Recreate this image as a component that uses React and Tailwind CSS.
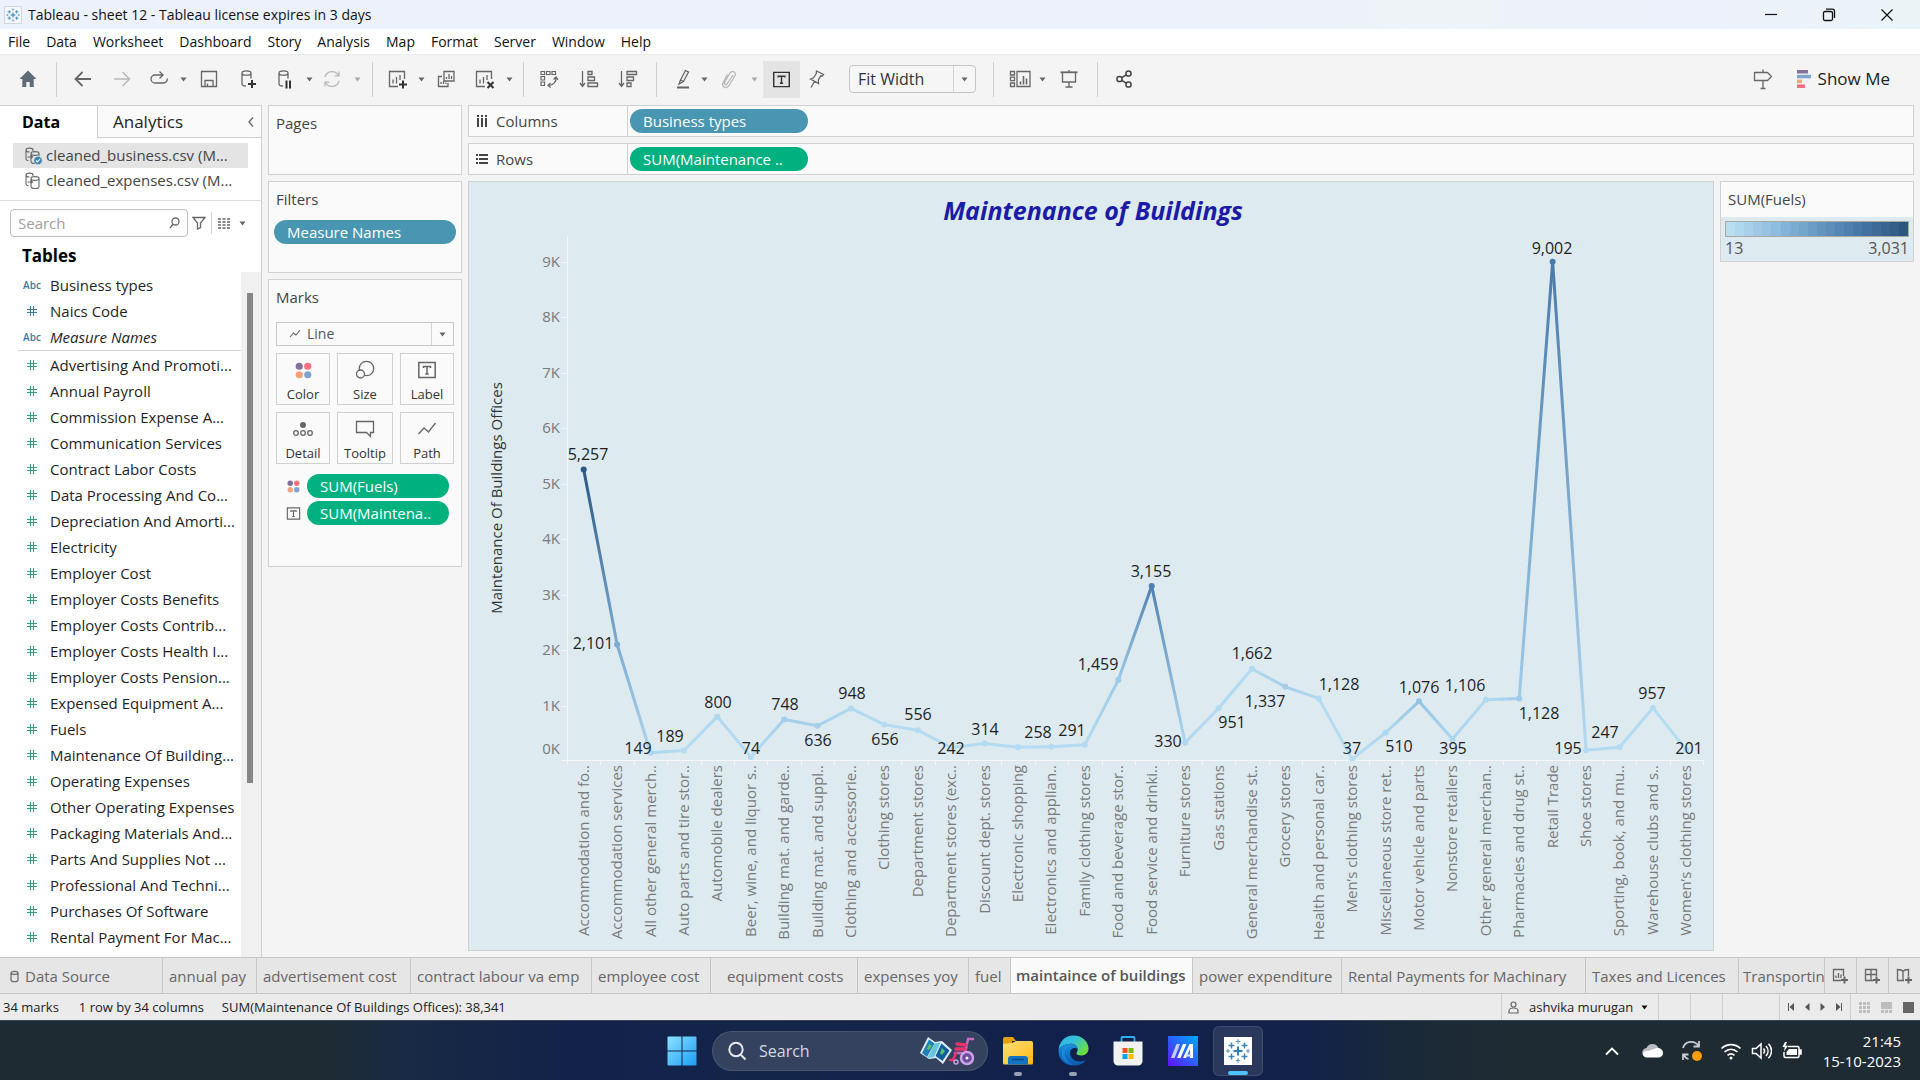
import React from "react";

const MENU = ["File", "Data", "Worksheet", "Dashboard", "Story", "Analysis", "Map", "Format", "Server", "Window", "Help"];

const DIMENSIONS = [
  { name: "Business types", kind: "Abc" },
  { name: "Naics Code", kind: "#" },
  { name: "Measure Names", kind: "Abc", italic: true },
];

const MEASURES = [
  "Advertising And Promoti...",
  "Annual Payroll",
  "Commission Expense A...",
  "Communication Services",
  "Contract Labor Costs",
  "Data Processing And Co...",
  "Depreciation And Amorti...",
  "Electricity",
  "Employer Cost",
  "Employer Costs Benefits",
  "Employer Costs Contrib...",
  "Employer Costs Health I...",
  "Employer Costs Pension...",
  "Expensed Equipment A...",
  "Fuels",
  "Maintenance Of Building...",
  "Operating Expenses",
  "Other Operating Expenses",
  "Packaging Materials And...",
  "Parts And Supplies Not ...",
  "Professional And Techni...",
  "Purchases Of Software",
  "Rental Payment For Mac...",
];

// name, value, colour, label text, label centre x, label centre y
const POINTS = [
  ["Accommodation and fo..", 5257, "#2a5783", "5,257", 119, 232],
  ["Accommodation services", 2101, "#7cabd3", "2,101", 124, 421],
  ["All other general merch..", 149, "#acd5ee", "149", 169, 526],
  ["Auto parts and tire stor..", 189, "#b7dcf1", "189", 201, 514],
  ["Automobile dealers", 800, "#aed7ef", "800", 249, 480],
  ["Beer, wine, and liquor s..", 74, "#b7dcf2", "74", 282, 526],
  ["Building mat. and garde..", 748, "#a3cfeb", "748", 316, 482],
  ["Building mat. and suppl..", 636, "#a6d0ea", "636", 349, 518],
  ["Clothing and accessorie..", 948, "#b0d9f0", "948", 383, 471],
  ["Clothing stores", 656, "#b4dbf1", "656", 416, 517],
  ["Department stores", 556, "#b4dbf1", "556", 449, 492],
  ["Department stores (exc..", 242, "#b7dcf2", "242", 482, 526],
  ["Discount dept. stores", 314, "#b2daf1", "314", 516, 507],
  ["Electronic shopping", 248, "#b4dbf1", "", 0, 0],
  ["Electronics and applian..", 258, "#b4dbf1", "258", 569, 510],
  ["Family clothing stores", 291, "#b4dbf1", "291", 603, 508],
  ["Food and beverage stor..", 1459, "#9ccae8", "1,459", 629, 442],
  ["Food service and drinki..", 3155, "#4f80b1", "3,155", 682, 349],
  ["Furniture stores", 330, "#b0d8f0", "330", 699, 519],
  ["Gas stations", 951, "#b2daf1", "951", 763, 500],
  ["General merchandise st..", 1662, "#b2daf1", "1,662", 783, 431],
  ["Grocery stores", 1337, "#a3ceea", "1,337", 796, 479],
  ["Health and personal car..", 1128, "#b2daf1", "1,128", 870, 462],
  ["Men’s clothing stores", 37, "#b9ddf1", "37", 883, 526],
  ["Miscellaneous store ret..", 510, "#afd8f0", "510", 930, 524],
  ["Motor vehicle and parts", 1076, "#94c4e4", "1,076", 950, 465],
  ["Nonstore retailers", 395, "#acd5ee", "395", 984, 526],
  ["Other general merchan..", 1106, "#b2daf1", "1,106", 996, 463],
  ["Pharmacies and drug st..", 1128, "#9ecbe8", "1,128", 1070, 491],
  ["Retail Trade", 9002, "#4a7aab", "9,002", 1083, 26],
  ["Shoe stores", 195, "#b4dbf1", "195", 1099, 526],
  ["Sporting, book, and  mu..", 247, "#b4dbf1", "247", 1136, 510],
  ["Warehouse clubs and s..", 957, "#b4dbf1", "957", 1183, 471],
  ["Women’s clothing stores", 201, "#b7dcf2", "201", 1220, 526],
];

const LEGEND = [
  "#b9ddf1", "#afd8ef", "#a8d0e8", "#9fc8e6", "#97c3e2", "#8dbcde", "#84b3da", "#7cabd0", "#74a5cb", "#6c9dc5",
  "#6495be", "#5d8db8", "#5586b5", "#4f7fae", "#4879a6", "#43719f", "#3e6a97", "#38648f", "#325d87", "#2b5680",
];

const SHEETS = [
  ["annual pay", "w-[94px] pl-1.5"],
  ["advertisement cost", "w-[154px] pl-1.5"],
  ["contract labour va emp", "w-[181px] pl-1.5"],
  ["employee cost", "w-[119px] pl-1.5"],
  ["equipment costs", "w-[147px] pl-4"],
  ["expenses yoy", "w-[111px] pl-1.5"],
  ["fuel", "w-[42px] pl-1.5"],
  ["maintaince of buildings", "w-[182px] pl-[5px]", true],
  ["power expenditure", "w-[149px] pl-1.5"],
  ["Rental Payments for Machinary", "w-[244px] pl-1.5"],
  ["Taxes and Licences", "w-[153px] pl-1.5"],
];

const Svg = ({ w = 20, h = 20, children, color = "#666", sw = 1.3, ...rest }) => (
  <svg width={w} height={h} viewBox={`0 0 ${w} ${h}`} fill="none" stroke={color} strokeWidth={sw} aria-hidden="true" className="shrink-0" {...rest}>
    {children}
  </svg>
);

const Caret = ({ color = "#666" }) => (
  <svg width="7" height="5" viewBox="0 0 7 5" aria-hidden="true"><path d="M0.5 0.5h6l-3 4z" fill={color} /></svg>
);

const cross = (x, y, s, color, w) => (
  <path key={`${x}-${y}`} d={`M${x - s} ${y}h${2 * s}M${x} ${y - s}v${2 * s}`} stroke={color} strokeWidth={w} />
);

function TableauMark({ size, className }) {
  return (
    <svg width={size} height={size} viewBox="0 0 28 28" className={className} fill="none" aria-hidden="true">
      {cross(14, 14, 4.5, "#2f7fb5", 2)}
      {cross(7.5, 8.5, 3, "#3b87b4", 1.5)}
      {cross(20.5, 8.5, 3, "#3b87b4", 1.5)}
      {cross(7.5, 19.5, 3, "#3b87b4", 1.5)}
      {cross(20.5, 19.5, 3, "#3b87b4", 1.5)}
      {cross(14, 4.5, 2.2, "#5b9bc4", 1.2)}
      {cross(14, 23.5, 2.2, "#5b9bc4", 1.2)}
      {cross(4, 14, 2, "#5b9bc4", 1.2)}
      {cross(24, 14, 2, "#5b9bc4", 1.2)}
    </svg>
  );
}

const Home = () => (
  <Svg><path d="M10 1.500 1.500 10h2.800v8h4v-5h3.400v5h4v-8h2.800z" fill="#5f6b79" stroke="none" /></Svg>
);
const Back = () => <Svg sw={1.8}><path d="M18 10H3M9.500 3 2.500 10l7 7" /></Svg>;
const Forward = () => <Svg sw={1.5} color="#b8b8b8"><path d="M2 10h15M10.500 3l7 7-7 7" /></Svg>;
const Redo = () => (
  <Svg><path d="M13.500 6H6a4 4 0 0 0 0 8h8.500a4 4 0 0 0 3.800-4.500M10.500 2.500 14 6l-3.500 3.500" /></Svg>
);
const Save = () => <Svg><path d="M2.500 2.500h15v15h-15zM6 17.500v-6h8v6M8.500 17.500v-3" /></Svg>;
const Cylinder = "M4 4c0-1.400 2-2.200 4.500-2.200S13 2.600 13 4v5.500M4 4v11c0 1 1.500 1.900 4 2M4 4c0 1.400 2 2.200 4.500 2.200S13 5.400 13 4";
const DbPlus = () => <Svg><path d={Cylinder} /><path d="M14 11v8M10 15h8" stroke="#333" strokeWidth="2" /></Svg>;
const DbPause = () => <Svg><path d={Cylinder} /><path d="M11.500 11.500v8M15 11.500v8" stroke="#333" strokeWidth="2" /></Svg>;
const Refresh = () => (
  <Svg color="#b8b8b8"><path d="M3 8a7.300 7.300 0 0 1 13.500-1.500M17 12a7.300 7.300 0 0 1-13.500 1.500M17 2.500v4.300h-4.300M3 17.500v-4.300h4.300" /></Svg>
);
const NewSheet = () => (
  <Svg w={22} h={22}><path d="M12 18.500H3.500v-15h15V11M7 15.500v-4M10.500 15.500V9M14 12V7" /><path d="M17 12.500v8M13 16.500h8" stroke="#333" strokeWidth="2" /></Svg>
);
const Duplicate = () => <Svg><path d="M8 2.500h10v9.500H8zM6 7.500H2.500v10H12V14M10.500 10V8M13 10V5M15.500 10V7M5 15v-2M7.500 15v-3M10 15v-1.500" /></Svg>;
const ClearSheet = () => (
  <Svg w={22} h={22}><path d="M12 18.500H3.500v-15h15V11M7 15.500v-4M10.500 15.500V9M14 12V7" /><path d="M14.500 14l6 6M20.500 14l-6 6" stroke="#333" strokeWidth="2" /></Svg>
);
const Swap = () => (
  <Svg sw={1.2}><path d="M2 2.500h3.500v3H2zM7.500 2.500H11v3H7.500zM13 2.500h3.500v3H13zM2 7.500h3.500v3.500H2zM2 13h3.500v3.500H2zM17 8.500c.5 4-2.500 7.500-7.500 8M14.500 10.500l2.500-2.500 2 2.800M11.500 14l-2.500 2.500 2.700 2" /></Svg>
);
const SortAsc = () => <Svg><path d="M3.500 2v15M1 14l2.500 3.500L6 14M9 2.500h4v3H9zM9 8h6.500v3.500H9zM9 14h9.500v3.500H9z" /></Svg>;
const SortDesc = () => <Svg><path d="M3.500 2v15M1 14l2.500 3.500L6 14M9 2.500h9.500v3H9zM9 8h6.500v3.500H9zM9 14h4v3.500H9z" /></Svg>;
const Highlight = () => (
  <Svg><path d="M12.500 1.500l3 1.500-5 9.500-3-1.500zM7.500 11 6 15l4.500-2.500" /><path d="M4 18.500h12" strokeWidth="2" /></Svg>
);
const Clip = () => (
  <Svg color="#b8b8b8"><path d="M14 6 8 15c-1 1.500-3.300.3-2.500-1.500L11 4c2-3 6.500-.8 5 2.500l-6 10c-2.500 4-8.200 1.200-6-3l4.500-8" /></Svg>
);
const LabelT = ({ size = 20, color = "#444" }) => (
  <svg width={size} height={size} viewBox="0 0 20 20" fill="none" stroke={color} strokeWidth="1.500" aria-hidden="true" className="shrink-0">
    <path d="M1.800 2.500h16.400v15H1.800zM6.500 8V6.500h7V8M10 6.500v7.500M8.300 14h3.400" />
  </svg>
);
const Pin = () => <Svg><path d="M9.500 2l7 3.500-1.200 1.500-1.500-.2-2.500 4.200.3 3.500-8-4.500 3-1.200 2.700-4.200zM7.500 12.500l-3.500 6" /></Svg>;
const CardsIcon = () => (
  <Svg w={22}><path d="M1.500 2.500h4v3.500h-4zM1.500 8.200h4v3.500h-4zM1.500 14h4v3.500h-4zM8 2.500h13v15H8z" /><path d="M11.500 15.500v-3M14.500 15.500V7M17.500 15.500V9.500" strokeWidth="1.600" /></Svg>
);
const Present = () => <Svg><path d="M3.500 3.500v9.500h13V3.500M10 13v4.500M6.500 18h7M10 1v2" /><path d="M1.500 3.300h17" strokeWidth="1.800" /></Svg>;
const Share = () => (
  <Svg sw={1.5} color="#444"><circle cx="5.500" cy="10" r="2.600" /><circle cx="14.500" cy="4.500" r="2.600" /><circle cx="14.500" cy="15.500" r="2.600" /><path d="M7.700 8.600l4.600-2.800M7.700 11.400l4.600 2.800" /></Svg>
);

const Sep = ({ className }) => <div className={`h-[35px] w-px bg-[#cfcfcf] ${className}`} />;
const Tool = ({ label, className, children }) => (
  <button type="button" aria-label={label} className={`flex h-[37px] items-center justify-center ${className}`}>{children}</button>
);

function Toolbar() {
  return (
    <div className="flex h-[51px] items-center border-t border-[#ececec] bg-[#f4f4f4] pb-0.5">
      <Tool label="Home" className="w-14"><Home /></Tool>
      <Sep />
      <Tool label="Undo" className="ml-[7px] w-[38px]"><Back /></Tool>
      <Tool label="Redo" className="w-10"><Forward /></Tool>
      <Tool label="Replay" className="w-[34px]"><Redo /></Tool>
      <Tool label="Replay options" className="w-3.5"><Caret /></Tool>
      <Tool label="Save" className="w-[38px]"><Save /></Tool>
      <Tool label="New data source" className="w-10"><DbPlus /></Tool>
      <Tool label="Pause updates" className="w-[34px]"><DbPause /></Tool>
      <Tool label="Pause options" className="w-3.5"><Caret /></Tool>
      <Tool label="Run update" className="w-8"><Refresh /></Tool>
      <Tool label="Update options" className="w-[18px]"><Caret color="#aaa" /></Tool>
      <Sep className="ml-1.5" />
      <Tool label="New worksheet" className="ml-[9px] w-[30px]"><NewSheet /></Tool>
      <Tool label="New worksheet options" className="w-[18px]"><Caret /></Tool>
      <Tool label="Duplicate" className="w-8"><Duplicate /></Tool>
      <Tool label="Clear sheet" className="ml-1 w-9"><ClearSheet /></Tool>
      <Tool label="Clear options" className="w-3.5"><Caret /></Tool>
      <Sep className="ml-[7px]" />
      <Tool label="Swap rows and columns" className="ml-[5px] w-10"><Swap /></Tool>
      <Tool label="Sort ascending" className="w-10"><SortAsc /></Tool>
      <Tool label="Sort descending" className="w-[38px]"><SortDesc /></Tool>
      <Sep className="ml-[9px]" />
      <Tool label="Highlight" className="ml-2.5 w-8"><Highlight /></Tool>
      <Tool label="Highlight options" className="w-2.5"><Caret /></Tool>
      <Tool label="Group members" className="w-10"><Clip /></Tool>
      <Tool label="Group options" className="w-2.5"><Caret color="#aaa" /></Tool>
      <Tool label="Show mark labels" className="ml-1 w-[37px] bg-[#e4e4e4]"><LabelT size={19} color="#333" /></Tool>
      <Tool label="Fix axes" className="w-[34px]"><Pin /></Tool>
      <div className="relative ml-[15px] h-7 w-[127px] rounded-sm border border-[#c4c4c4] bg-[#f6f6f6]">
        <select aria-label="Fit" className="h-full w-full appearance-none bg-transparent pl-2 text-base leading-6 text-[#333]">
          <option>Fit Width</option>
        </select>
        <div className="pointer-events-none absolute inset-y-0 right-0 flex w-[22px] items-center justify-center border-l border-[#d4d4d4]"><Caret /></div>
      </div>
      <Sep className="ml-[17px]" />
      <Tool label="Show or hide cards" className="ml-[11px] w-[30px]"><CardsIcon /></Tool>
      <Tool label="Card options" className="w-3.5"><Caret /></Tool>
      <Tool label="Presentation mode" className="w-10"><Present /></Tool>
      <Sep className="ml-2" />
      <Tool label="Share" className="ml-2.5 w-8"><Share /></Tool>
      <div className="flex-1" />
      <Tool label="Data guide" className="mr-5 w-7"><Svg h={22}><path d="M1.500 4.500h13l4 4-4 4h-13zM10 1.500v3M10 12.500v8M7.500 20.500h5" strokeLinejoin="round" /></Svg></Tool>
      <button type="button" className="mr-[30px] flex items-center gap-[7px] text-[17px] text-[#222]">
        <svg width="14" height="18" viewBox="0 0 14 18" aria-hidden="true">
          <path d="M0 0h11v3.500H0z" fill="#86719a" /><path d="M0 4.800h14v3.500H0z" fill="#7fa5cf" />
          <path d="M0 9.600h5v3.500H0z" fill="#f4a27c" /><path d="M0 14.400h8V18H0z" fill="#f9707f" />
        </svg>
        Show Me
      </button>
    </div>
  );
}

const DbSource = ({ checked }) => (
  <Svg w={20} sw={1.1}>
    <path d="M3 4c0-2.500 7-2.500 7 0v1M3 4c0 1.500 2 2 3.500 2M3 4v9c0 .8 1 1.500 2.500 1.800M8 7.500c0-2.500 8-2.500 8 0s-8 2.500-8 0zM8 7.500v8c0 1.200 2 2 4 2s4-.8 4-2v-8M4.500 11h5M7.500 9l2 2-2 2" />
    {checked && <><circle cx="15" cy="14.500" r="4.300" fill="#3d85b5" stroke="#e4e4e4" strokeWidth=".8" /><path d="M13 14.500l1.500 1.500 2.500-3" stroke="#fff" /></>}
  </Svg>
);

function FieldRow({ name, kind, italic, green }) {
  return (
    <li>
      <button type="button" className="flex h-[26px] w-full items-center text-left text-[15px] text-[#1f1f1f]">
        <span className="flex w-[50px] shrink-0 items-center justify-center pl-3.5">
          {kind === "Abc" ? (
            <span className="text-[10px] font-semibold text-[#3c7a9c]">Abc</span>
          ) : (
            <Svg w={12} h={12} sw={1.1} color={green ? "#35a077" : "#3c7a9c"}><path d="M4.500 1v10M7.500 1v10M1 4.500h10M1 7.500h10" /></Svg>
          )}
        </span>
        <span className={italic ? "whitespace-nowrap italic" : "whitespace-nowrap"}>{name}</span>
      </button>
    </li>
  );
}

function DataPane() {
  return (
    <aside className="flex w-[262px] shrink-0 flex-col border-t border-r border-[#cfcfcf] bg-white">
      <div className="flex h-8">
        <button type="button" className="w-[97px] pr-[15px] text-center text-base font-bold text-black">Data</button>
        <button type="button" className="flex flex-1 items-center justify-between border-b border-l border-[#cfcfcf] bg-[#fafafa] pr-1.5 pl-[15px] text-[17px] text-[#222]">
          Analytics
          <Svg w={8} h={12}><path d="M6 1.500 2 6l4 4.500" /></Svg>
        </button>
      </div>
      <div className="flex flex-col px-[13px] pt-[5px] pb-[7px]">
        <button type="button" className="flex h-[25px] items-center gap-[3px] bg-[#e4e4e4] pl-2.5 text-[15px] whitespace-nowrap text-[#444]"><DbSource checked />cleaned_business.csv (M...</button>
        <button type="button" className="flex h-[25px] items-center gap-[3px] pl-2.5 text-[15px] whitespace-nowrap text-[#444]"><DbSource />cleaned_expenses.csv (M...</button>
      </div>
      <div className="flex items-center border-t border-[#dedede] pt-2 pr-3 pl-2.5">
        <label className="flex h-7 w-[178px] items-center rounded-sm border border-[#bdbdbd] pr-[7px] pl-[7px]">
          <input type="text" placeholder="Search" aria-label="Search fields" className="min-w-0 flex-1 text-[15px] outline-none placeholder:text-[#a0a0a0]" />
          <Svg w={11} h={12}><circle cx="6.500" cy="4.500" r="3.500" /><path d="M4 7 1 11" /></Svg>
        </label>
        <button type="button" aria-label="Filter" className="ml-px flex w-5 justify-center"><Svg w={14} h={14}><path d="M1 1.500h12L8.500 7v4.500l-3 1.500V7z" /></Svg></button>
        <div className="ml-0.5 h-[22px] w-px bg-[#d4d4d4]" />
        <button type="button" aria-label="View options" className="ml-1.5 flex flex-1 items-center gap-[9px]">
          <Svg w={12} h={11}><path d="M0 1h12M0 4h12M0 7h12M0 10h12" strokeDasharray="3 1.500" /></Svg>
          <Caret />
        </button>
      </div>
      <h2 className="pt-[5px] pb-0.5 pl-[22px] text-[17px] leading-7 font-bold text-black">Tables</h2>
      <div className="flex flex-1">
        <div className="w-[241px]">
          <ul>{DIMENSIONS.map((d) => <FieldRow key={d.name} {...d} />)}</ul>
          <div className="ml-[18px] h-px bg-[#d8d8d8]" />
          <ul className="pt-px">{MEASURES.map((m) => <FieldRow key={m} name={m} kind="#" green />)}</ul>
        </div>
        <div className="flex flex-1 justify-center bg-[#f0f0f0] pt-[21px] pr-0.5">
          <div className="h-[490px] w-1.5 bg-[#868686]" />
        </div>
      </div>
    </aside>
  );
}

const Pill = ({ children, className }) => (
  <button type="button" className={`h-6 rounded-full px-[13px] text-left text-[15px] leading-6 font-medium whitespace-nowrap text-white ${className}`}>{children}</button>
);

const ColorDots = ({ size }) => (
  <svg width={size} height={size} viewBox="0 0 18 18" aria-hidden="true">
    <circle cx="4.500" cy="4.500" r="3.800" fill="#86719a" /><circle cx="13.500" cy="4.500" r="3.800" fill="#f9707f" />
    <circle cx="4.500" cy="13.500" r="3.800" fill="#f4a27c" /><circle cx="13.500" cy="13.500" r="3.800" fill="#7fa5cf" />
  </svg>
);

const MARK_BUTTONS = [
  ["Color", <ColorDots size={17} />],
  ["Size", <Svg w={20}><circle cx="11.500" cy="8.500" r="7.200" /><circle cx="5.500" cy="14" r="4" fill="#fafafa" /></Svg>],
  ["Label", <LabelT size={20} color="#666" />],
  ["Detail", <Svg w={22} h={18}><circle cx="11" cy="5" r="3" fill="#666" stroke="none" /><circle cx="4" cy="13" r="2.300" /><circle cx="11" cy="13" r="2.300" /><circle cx="18" cy="13" r="2.300" /></Svg>],
  ["Tooltip", <Svg><path d="M1.500 2.500h17v11h-3v4l-4-4h-10z" /></Svg>],
  ["Path", <Svg><path d="M1.500 15l5.500-6 4.500 4 7-9" /></Svg>],
];

function Shelves() {
  return (
    <div className="flex w-[194px] shrink-0 flex-col gap-1.5 text-[15px] leading-5 text-[#444]">
      <section className="h-[70px] border border-[#d0d0d0] bg-[#fafafa] px-[7px] pt-[7px]">Pages</section>
      <section className="h-[92px] border border-[#d0d0d0] bg-[#fafafa] px-[5px] pt-[7px]">
        <h3 className="px-0.5">Filters</h3>
        <Pill className="mt-[11px] w-full bg-[#4996b2]">Measure Names</Pill>
      </section>
      <section className="h-[288px] border border-[#d0d0d0] bg-[#fafafa] px-[7px] pt-[7px]">
        <h3>Marks</h3>
        <div className="relative mt-[15px] h-6 border border-[#c8c8c8] bg-[#fafafa]">
          <select aria-label="Mark type" className="h-full w-full appearance-none bg-transparent pl-[30px] text-sm leading-5 text-[#555]"><option>Line</option></select>
          <div className="pointer-events-none absolute top-[6px] left-3"><Svg w={12} h={10} sw={1.1}><path d="M1 8l3.500-4L7 6l4-5" /></Svg></div>
          <div className="pointer-events-none absolute inset-y-0 right-0 flex w-[22px] items-center justify-center border-l border-[#d4d4d4]"><Caret /></div>
        </div>
        <div className="mt-[7px] grid grid-cols-[54px_56px_54px] gap-[7px]">
          {MARK_BUTTONS.map(([label, icon]) => (
            <button key={label} type="button" className="flex h-[52px] flex-col items-center justify-between border border-[#d0d0d0] pt-1.5 text-[13px] leading-5 text-[#333]">
              <span className="flex h-5 items-center">{icon}</span>{label}
            </button>
          ))}
        </div>
        <div className="mt-2.5 grid grid-cols-[24px_142px] items-center gap-x-[7px] gap-y-[3px]">
          <span className="flex justify-center pl-[11px]"><ColorDots size={15} /></span><Pill className="bg-[#00b180]">SUM(Fuels)</Pill>
          <span className="flex justify-center pl-[11px]"><LabelT size={15} color="#666" /></span><Pill className="bg-[#00b180]">SUM(Maintena..</Pill>
        </div>
      </section>
    </div>
  );
}

const PLOT_LEFT = 98;
const PLOT_RIGHT = 1234;
const BASE = 539;
const STEP = (PLOT_RIGHT - PLOT_LEFT) / POINTS.length;
const px = (i) => PLOT_LEFT + STEP * (i + 0.5);
const py = (v) => BASE - (v / 1000) * 55.45;

function Chart() {
  return (
    <svg viewBox="0 0 1244 728" className="block h-full w-full" role="img" aria-label="Maintenance of buildings by business type">
      <defs>
        <clipPath id="plot"><rect x={PLOT_LEFT} y="0" width={PLOT_RIGHT - PLOT_LEFT} height={BASE} /></clipPath>
        {POINTS.slice(1).map((p, i) => (
          <linearGradient key={i} id={`seg${i}`} gradientUnits="userSpaceOnUse" x1={px(i)} y1={py(POINTS[i][1])} x2={px(i + 1)} y2={py(p[1])}>
            <stop offset="0" stopColor={POINTS[i][2]} /><stop offset="1" stopColor={p[2]} />
          </linearGradient>
        ))}
      </defs>
      <g stroke="#f7f7f7" strokeWidth="1">
        <path d={`M${PLOT_LEFT + 0.5} 13.500V${BASE}`} />
        {Array.from({ length: 9 }, (_, k) => <path key={k} d={`M${PLOT_LEFT - 5} ${Math.round(py((k + 1) * 1000)) + 0.5}h5`} />)}
        {Array.from({ length: 35 }, (_, k) => <path key={k} d={`M${Math.round(PLOT_LEFT + STEP * k) + 0.5} ${BASE}v4`} />)}
      </g>
      <path d={`M${PLOT_LEFT - 5} ${BASE - 0.5}H${PLOT_RIGHT + 1}`} stroke="#f7f7f7" strokeWidth="1" />
      <g clipPath="url(#plot)">
        {POINTS.slice(1).map((p, i) => (
          <line key={i} x1={px(i)} y1={py(POINTS[i][1])} x2={px(i + 1)} y2={py(p[1])} stroke={`url(#seg${i})`} strokeWidth="3" strokeLinecap="round" />
        ))}
        {POINTS.map((p, i) => <circle key={i} cx={px(i)} cy={py(p[1])} r="3" fill={p[2]} />)}
      </g>
      <g fontSize="15" fill="#7a7a7a">
        {Array.from({ length: 10 }, (_, k) => (
          <text key={k} x="91" y={(k === 0 ? 527 : py(k * 1000)) + 5} textAnchor="end">{k}K</text>
        ))}
        {POINTS.map((p, i) => (
          <text key={i} transform={`translate(${px(i) + 5} 543) rotate(-90)`} textAnchor="end">{p[0]}</text>
        ))}
      </g>
      <text transform="translate(33 276) rotate(-90)" textAnchor="middle" fontSize="15" fill="#333">Maintenance Of Buildings Offices</text>
      <g fontSize="16" fill="#1f1f1f" textAnchor="middle">
        {POINTS.map((p, i) => p[3] && <text key={i} x={p[4]} y={p[5] + 6}>{p[3]}</text>)}
      </g>
    </svg>
  );
}

function Shelf({ label, icon, children }) {
  return (
    <div className="flex h-8 border border-[#d0d0d0] bg-[#fafafa]">
      <div className="flex w-[159px] items-center gap-2 border-r border-[#d0d0d0] pl-[7px] text-[15px] text-[#444]">{icon}{label}</div>
      <div className="flex items-center pl-0.5">{children}</div>
    </div>
  );
}

function Workspace() {
  return (
    <div className="flex min-w-0 flex-1 flex-col gap-1.5">
      <Shelf label="Columns" icon={<svg width="12" height="12" viewBox="0 0 12 12" fill="#444" aria-hidden="true"><path d="M1 0h2v2H1zM5 0h2v2H5zM9 0h2v2H9zM1 3h2v9H1zM5 3h2v9H5zM9 3h2v9H9z" /></svg>}>
        <Pill className="w-[178px] bg-[#4996b2]">Business types</Pill>
      </Shelf>
      <Shelf label="Rows" icon={<svg width="12" height="12" viewBox="0 0 12 12" fill="#444" aria-hidden="true"><path d="M0 1h2v2H0zM0 5h2v2H0zM0 9h2v2H0zM3 1h9v2H3zM3 5h9v2H3zM3 9h9v2H3z" /></svg>}>
        <Pill className="w-[178px] bg-[#00b180]">SUM(Maintenance ..</Pill>
      </Shelf>
      <div className="flex flex-1 items-start gap-1.5">
        <main className="flex min-w-0 flex-1 flex-col border border-[#d0d0d0] bg-[#ddeaef]">
          <h1 className="pt-4 pl-1 text-center text-[25px] leading-6 font-bold text-[#1b1ba8] italic">Maintenance of Buildings</h1>
          <Chart />
        </main>
        <section className="w-[194px] shrink-0 border border-[#d0d0d0] bg-[#fafafa] text-[15px] text-[#555]">
          <h2 className="px-[7px] pt-[7px] pb-2 leading-5 text-[#444]">SUM(Fuels)</h2>
          <div className="bg-[#ddeaef] px-1 pt-1">
            <div className="flex h-4 border border-[#a9a9a0]">
              {LEGEND.map((c) => <div key={c} className="flex-1" style={{ backgroundColor: c }} />)}
            </div>
            <div className="flex justify-between pt-px pb-[3px] text-base leading-5"><span>13</span><span>3,031</span></div>
          </div>
        </section>
      </div>
    </div>
  );
}

const TabIcon = ({ label, children }) => (
  <button type="button" aria-label={label} className="flex w-8 items-center justify-center border-l border-[#c6c6c6]">{children}</button>
);

function SheetTabs() {
  return (
    <nav className="flex h-[37px] border-y border-[#c6c6c6] bg-[#e6e6e6] text-[15px] text-[#666]">
      <button type="button" className="flex w-[162px] shrink-0 items-center gap-1.5 pt-0.5 pl-2.5">
        <Svg w={9} h={13} sw={1.2}><path d="M1 3c0-2.300 7-2.300 7 0v7c0 2.300-7 2.300-7 0zM1 3c0 1.800 7 1.800 7 0" /></Svg>Data Source
      </button>
      {SHEETS.map(([name, cls, active]) => (
        <button key={name} type="button" className={`shrink-0 border-l border-[#c6c6c6] text-left whitespace-nowrap ${cls} ${active ? "bg-[#fafafa] font-semibold text-[#555]" : "pt-0.5"}`}>{name}</button>
      ))}
      <button type="button" className="min-w-0 flex-1 border-l border-[#c6c6c6] pt-0.5 pl-1 text-left whitespace-nowrap">Transportin</button>
      <TabIcon label="New worksheet"><Svg w={17} h={16}><path d="M9 12.500H1.500v-11h10V8M4 10V7.500M6.500 10V5M9 10V6.500" /><path d="M12.500 8.500v7M9 12h7" strokeWidth="2" /></Svg></TabIcon>
      <TabIcon label="New dashboard"><Svg w={17} h={16}><path d="M9 12.500H1.500v-11h11V8M7 1.500v11M1.500 6.500h11" /><path d="M12.500 8.500v7M9 12h7" strokeWidth="2" /></Svg></TabIcon>
      <TabIcon label="New story"><Svg w={17} h={16}><path d="M7 3.500v9M8 12.500H1.500v-11c2.500 0 4.500.5 5.500 2 1-1.500 3-2 5.500-2V8" /><path d="M12.500 8.500v7M9 12h7" strokeWidth="2" /></Svg></TabIcon>
    </nav>
  );
}

function StatusBar() {
  return (
    <div className="flex h-[26px] bg-[#ebebeb] pl-[3px] text-[13px] leading-[26px] text-[#222]">
      <span>34 marks</span>
      <span className="ml-5">1 row by 34 columns</span>
      <span className="ml-[18px]">SUM(Maintenance Of Buildings Offices): 38,341</span>
      <div className="flex-1" />
      <button type="button" className="flex w-[157px] items-center border-l border-[#cfcfcf] pl-1.5">
        <Svg w={11} h={13} sw={1.2}><circle cx="5.500" cy="3.500" r="2.500" /><path d="M1 12V10c0-4 9-4 9 0v2z" /></Svg>
        <span className="ml-2.5 flex-1 text-left">ashvika murugan</span>
        <span className="mr-2.5"><Caret color="#111" /></span>
      </button>
      <div className="w-8 border-l border-[#cfcfcf]" />
      <div className="w-8 border-l border-[#cfcfcf]" />
      <div className="w-[57px] border-l border-[#cfcfcf]" />
      <div className="flex w-[71px] items-center justify-between border-l border-[#cfcfcf] px-2">
        <button type="button" aria-label="First sheet"><svg width="6" height="8" viewBox="0 0 6 8" fill="#555" aria-hidden="true"><path d="M0 0h1v8H0zM6 0v8L1.500 4z" /></svg></button>
        <button type="button" aria-label="Previous sheet"><svg width="5" height="8" viewBox="0 0 5 8" fill="#555" aria-hidden="true"><path d="M4.500 0v8L0 4z" /></svg></button>
        <button type="button" aria-label="Next sheet"><svg width="5" height="8" viewBox="0 0 5 8" fill="#555" aria-hidden="true"><path d="M.5 0v8L5 4z" /></svg></button>
        <button type="button" aria-label="Last sheet"><svg width="6" height="8" viewBox="0 0 6 8" fill="#555" aria-hidden="true"><path d="M5 0h1v8H5zM0 0v8L4.500 4z" /></svg></button>
      </div>
      <div className="flex w-[70px] items-center gap-[11px] border-l border-[#cfcfcf] pl-2">
        <button type="button" aria-label="Show sheet sorter"><svg width="11" height="11" viewBox="0 0 11 11" fill="#bdbdbd" aria-hidden="true"><path d="M0 0h3v3H0zM4 0h3v3H4zM8 0h3v3H8zM0 4h3v3H0zM4 4h3v3H4zM8 4h3v3H8zM0 8h3v3H0zM4 8h3v3H4zM8 8h3v3H8z" /></svg></button>
        <button type="button" aria-label="Show filmstrip"><svg width="11" height="11" viewBox="0 0 11 11" fill="#bdbdbd" aria-hidden="true"><path d="M0 0h11v7H0zM0 8h3v3H0zM4 8h3v3H4zM8 8h3v3H8z" /></svg></button>
        <button type="button" aria-label="Show tabs"><svg width="11" height="11" viewBox="0 0 11 11" fill="#666" aria-hidden="true"><path d="M0 0h11v11H0z" /></svg></button>
      </div>
    </div>
  );
}

const TaskApp = ({ label, running, active, children }) => (
  <button type="button" aria-label={label} className={`relative flex h-[50px] w-[50px] items-center justify-center rounded-md ${active ? "border border-white/10 bg-white/10" : ""}`}>
    {children}
    {running && <span className="absolute bottom-0 h-1 w-2 rounded-full bg-[#9aa0b4]" />}
    {active && <span className="absolute bottom-0 h-1 w-5 rounded-full bg-[#4cc2ff]" />}
  </button>
);

function Taskbar() {
  return (
    <footer className="grid h-[60px] grid-cols-[1fr_auto_1fr] items-center border-t border-[#3a4656] bg-[linear-gradient(90deg,#1f2b33_0%,#1f2b33_17%,#182a44_21%,#12224a_30%,#14254a_40%,#12214b_55%,#12224a_68%,#1a2938_73%,#1f2b33_78%,#1f2b33_100%)] text-white">
      <div />
      <div className="flex items-center gap-[5px]">
        <TaskApp label="Start">
          <svg width="30" height="30" viewBox="0 0 30 30" aria-hidden="true">
            <defs><linearGradient id="win" x1="0" y1="0" x2="1" y2="1" gradientUnits="objectBoundingBox"><stop offset="0" stopColor="#8be2ff" /><stop offset="1" stopColor="#1b9df5" /></linearGradient></defs>
            <path d="M1.500.5h13v14H.5v-13a1 1 0 0 1 1-1zM15.500.5h13a1 1 0 0 1 1 1v13h-14zM.5 15.500h14v14h-13a1 1 0 0 1-1-1zM15.500 15.500h14v13a1 1 0 0 1-1 1h-13z" fill="url(#win)" />
          </svg>
        </TaskApp>
        <label className="flex h-10 w-[276px] items-center rounded-full border border-white/10 bg-[#35425f] pr-2.5 pl-3.5">
          <Svg w={20} color="#e8e8ee" sw={2}><circle cx="9" cy="8.500" r="6.700" /><path d="M13.500 13.500 18.500 18.500" /></Svg>
          <input type="text" placeholder="Search" aria-label="Windows search" className="ml-3 min-w-0 flex-1 bg-transparent text-base outline-none placeholder:text-[#d5d8e0]" />
          <svg width="58" height="32" viewBox="0 0 58 32" aria-hidden="true">
            <path d="M9 2l7 5 7-1 10 9-9 14-7-6-7 1-9-6z" fill="#dfeef8" />
            <path d="M10 4.500l5.500 4L8 22l-5-4z" fill="#1f7fb8" /><path d="M15.500 8.500l6-1L15 22l-6.500 1z" fill="#66c5d8" /><path d="M22.500 8.500l8 7-7 10.500-7-5z" fill="#0f5f9c" />
            <path d="M10 9l3 2-3 4-2-1zM23 13l3 3-3 4-2-2z" fill="#5bbf6b" />
            <g fill="none" strokeLinecap="round">
              <path d="M54 4h-5l-3 14H36" stroke="#c76bc0" strokeWidth="2.500" /><path d="M38 9l9 1M37 14h9" stroke="#e8336d" strokeWidth="3.500" />
              <path d="M37 18l-3 7h-3" stroke="#e8336d" strokeWidth="2.500" />
              <circle cx="48" cy="23" r="6" stroke="#c9a0e6" strokeWidth="2.500" fill="#6c4a9c" /><circle cx="48" cy="23" r="1.500" fill="#fff" stroke="none" />
              <circle cx="37" cy="27" r="2" stroke="#c9a0e6" strokeWidth="1.500" />
            </g>
          </svg>
        </label>
        <TaskApp label="File Explorer" running>
          <svg width="32" height="30" viewBox="0 0 32 30" aria-hidden="true">
            <defs><linearGradient id="fold" x1="0" y1="0" x2="1" y2="1"><stop offset="0" stopColor="#ffe07a" /><stop offset="1" stopColor="#fdb813" /></linearGradient></defs>
            <path d="M1 3a2 2 0 0 1 2-2h8l3 4h-4v8H1z" fill="#e5a00d" /><path d="M1 8l9-1 4-2h15a2 2 0 0 1 2 2v20a1.500 1.500 0 0 1-1.500 1.500h-27A1.500 1.500 0 0 1 1 27z" fill="url(#fold)" />
            <path d="M6 28.500V23a3 3 0 0 1 3-3h14a3 3 0 0 1 3 3v5.500z" fill="#1272c4" /><path d="M10 23.500h12" stroke="#0a4a86" strokeWidth="1.500" />
          </svg>
        </TaskApp>
        <TaskApp label="Microsoft Edge" running>
          <svg width="31" height="31" viewBox="0 0 31 31" aria-hidden="true">
            <defs>
              <linearGradient id="edgeA" x1="0" y1="0" x2="1" y2=".6"><stop offset="0" stopColor="#2bb6e8" /><stop offset=".5" stopColor="#35c1d8" /><stop offset="1" stopColor="#6be03c" /></linearGradient>
              <linearGradient id="edgeB" x1="0" y1="0" x2="0" y2="1"><stop offset="0" stopColor="#1b8fe0" /><stop offset="1" stopColor="#0b57b0" /></linearGradient>
            </defs>
            <path d="M.6 15C1 6.500 7.500.5 15.500.5 24.500.5 30.500 7 30.500 13.500c0 4-3 7-7 7-3 0-5-1-5-2.300 0-.8 1.200-1.500 1.200-3.700 0-3.200-3-5.800-7.200-5.800C7 8.700 2 12 .6 15z" fill="url(#edgeA)" />
            <path d="M.6 15C2 12 7 8.700 12.500 8.700c4.200 0 7.200 2.600 7.200 5.800-1.500-2.500-7.700-2-7.700 3.500 0 5 5 8.500 10 8.500 3 0 5-1 6-1.500-3 4-7.500 5.700-12.500 5.500C6.500 30.200-.2 24 .6 15z" fill="url(#edgeB)" />
            <path d="M11.500 10.500C7 12.500 5.500 18 7.500 22.500c1.600 3.700 4.800 6.700 8.500 7.800C8 29.500 3 24 4 17c.7-4 4-6.500 7.500-6.500z" fill="#1f9be8" opacity=".55" />
          </svg>
        </TaskApp>
        <TaskApp label="Microsoft Store">
          <svg width="30" height="30" viewBox="0 0 30 30" aria-hidden="true">
            <path d="M8.500 6V2a1 1 0 0 1 1-1h11a1 1 0 0 1 1 1v4" fill="none" stroke="#2fb0ea" strokeWidth="1.800" />
            <path d="M.5 5.500h29V25a4.500 4.500 0 0 1-4.500 4.500H5A4.500 4.500 0 0 1 .5 25z" fill="#f2f2f2" />
            <path d="M9.500 12h5v5h-5z" fill="#f25022" /><path d="M15.500 12h5v5h-5z" fill="#7fba00" /><path d="M9.500 18h5v5h-5z" fill="#00a4ef" /><path d="M15.500 18h5v5h-5z" fill="#ffb900" />
          </svg>
        </TaskApp>
        <TaskApp label="MyASUS">
          <svg width="30" height="30" viewBox="0 0 30 30" aria-hidden="true">
            <defs><linearGradient id="asus" x1="0" y1="1" x2="1" y2="0"><stop offset="0" stopColor="#6410ff" /><stop offset=".5" stopColor="#2a60ff" /><stop offset="1" stopColor="#00a8ff" /></linearGradient></defs>
            <path d="M0 0h30v30H0z" fill="url(#asus)" />
            <path d="M3 22 8.500 8h3.500L6.500 22z" fill="#c3d0ff" /><path d="M9 22 15 8h3.500L12.500 22z" fill="#fff" />
            <path d="M15 22 21.500 8H25v14h-3V13l-4 9z" fill="#fff" /><path d="M17.500 18.500H23v2h-5.500z" fill="#dbe4ff" />
          </svg>
        </TaskApp>
        <TaskApp label="Tableau" active><span className="bg-white"><TableauMark size={28} /></span></TaskApp>
      </div>
      <div className="flex items-center justify-end pr-[19px]">
        <button type="button" aria-label="Show hidden icons" className="mr-[22px]"><Svg w={16} h={12} color="#fff" sw={1.8}><path d="M2 9.500 8 3.500l6 6" /></Svg></button>
        <button type="button" aria-label="OneDrive" className="mr-4"><svg width="22" height="16" viewBox="0 0 22 16" aria-hidden="true"><path d="M5 14a4.500 4.500 0 0 1-.5-9A6.500 6.500 0 0 1 16.500 5L21 12z" fill="#b9bcc1" /><path d="M5 14.500c-2.500 0-4-1.500-4-3.500 0-2.500 2.500-4 5-3l9-3c3.500-.5 6 2 6 5a4.500 4.500 0 0 1-4.500 4.500z" fill="#fff" /></svg></button>
        <button type="button" aria-label="Update" className="mr-4">
          <Svg w={24} h={24} color="#c8ccd0" sw={1.8}><path d="M3 9a8.500 8.500 0 0 1 15.500-2M19 2v5.500h-5.500M3 21v-5.500h5.500M3.500 15.500c1 2 3 4 5 4.500" /><circle cx="17" cy="17" r="5" fill="#ff9d0a" stroke="none" /></Svg>
        </button>
        <button type="button" aria-label="Network, volume and battery" className="mr-[21px] flex items-center gap-[9px]">
          <Svg w={22} h={20} color="#fff" sw={1.7}><path d="M1.500 7.500c5.500-5.300 13.500-5.300 19 0M4.500 11c4-3.700 9-3.700 13 0M7.500 14.300c2.200-1.900 4.800-1.900 7 0" /><circle cx="11" cy="17" r="1.500" fill="#fff" stroke="none" /></Svg>
          <Svg w={21} h={20} color="#fff" sw={1.5}><path d="M1.500 7.500H5L10 3v14l-5-4.500H1.500zM12.500 7.500c1.300 1.500 1.300 3.500 0 5M15 5c2.700 3 2.700 7 0 10M17.500 2.800c4 4.200 4 10.200 0 14.400" /></Svg>
          <Svg w={21} h={20} color="#fff" sw={1.5}><path d="M7 5.500h9.500a1.500 1.500 0 0 1 1.500 1.500v8a1.500 1.500 0 0 1-1.500 1.500h-12A1.500 1.500 0 0 1 3 15v-4" /><path d="M18.500 9v4h1.500V9z" fill="#fff" /><path d="M8 8h8v6H5.500v-3z" fill="#fff" stroke="none" /><path d="M4 1 1.500 6h2.300L3 10.500 7 4.800H4.500L6 1z" fill="#fff" stroke="none" /></Svg>
        </button>
        <div className="text-right text-[15px] leading-5"><div>21:45</div><div>15-10-2023</div></div>
      </div>
    </footer>
  );
}

export default function App() {
  return (
    <div className="flex min-h-screen flex-col overflow-hidden bg-[#f4f4f4] font-['Open_Sans','Noto_Sans',sans-serif]">
      <header className="flex h-[29px] items-center bg-[linear-gradient(90deg,#edf1fb_0%,#edf1fb_60%,#edf3f7_75%,#edf1fb_88%,#eaf4f7_100%)] text-sm text-[#111]">
        <span className="ml-1 border border-[#d2d6de] bg-[#f5f8fb]"><TableauMark size={16} /></span>
        <span className="ml-1.5">Tableau - sheet 12 - Tableau license expires in 3 days</span>
        <div className="flex-1" />
        <button type="button" aria-label="Minimize" className="flex w-[58px] justify-center"><Svg w={14} h={14} color="#111" sw={1.2}><path d="M1 6.500h12" /></Svg></button>
        <button type="button" aria-label="Restore" className="flex w-[58px] justify-center"><Svg w={14} h={14} color="#111"><rect x="1.500" y="3.500" width="9" height="9" rx="1.500" /><path d="M4 1.200h6.500a2 2 0 0 1 2 2V10" /></Svg></button>
        <button type="button" aria-label="Close" className="mr-1 flex w-[58px] justify-center"><Svg w={14} h={14} color="#111" sw={1.2}><path d="M1.500 1.500l11 11M12.500 1.500l-11 11" /></Svg></button>
      </header>
      <nav className="flex h-[25px] bg-white pt-px text-sm leading-6 text-[#111]">
        {MENU.map((m) => <button key={m} type="button" className="px-2">{m}</button>)}
      </nav>
      <Toolbar />
      <div className="flex flex-1 gap-1.5 pr-1.5">
        <DataPane />
        <Shelves />
        <Workspace />
      </div>
      <SheetTabs />
      <StatusBar />
      <Taskbar />
    </div>
  );
}
